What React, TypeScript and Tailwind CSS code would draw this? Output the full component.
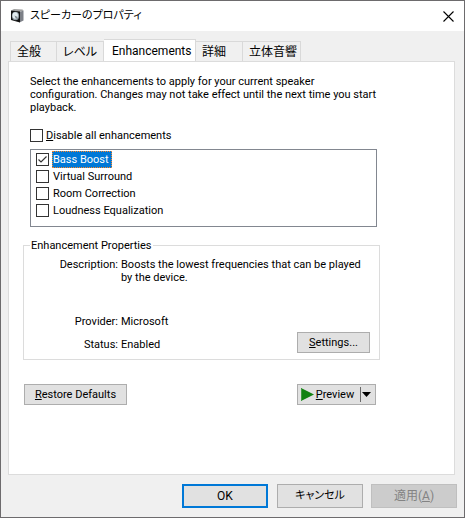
import clsx from 'clsx';
import { ReactNode, useState } from 'react';

interface CheckBoxProps {
    id: string;
    checked: boolean;
    onChange: () => void;
}

interface PushButtonProps {
    className?: string;
    disabled?: boolean;
    children: ReactNode;
}

const tabs = ['全般', 'レベル', 'Enhancements', '詳細', '立体音響'];

const enhancements = ['Bass Boost', 'Virtual Surround', 'Room Correction', 'Loudness Equalization'];

function SpeakerIcon() {
    return (
        <svg width="14" height="16" viewBox="0 0 14 16" aria-hidden="true">
            <path d="M0 2.5 3 1 11.5 1.5 12.5 2.5 8.5 4Z" fill="#a0a0a0" />
            <path d="M8.5 4 12.5 2.5V12.5L8.5 14.5Z" fill="#7d8087" />
            <path d="M0 2.5 9 3.5V14.5L0 12Z" fill="#111" />
            <ellipse cx="4.5" cy="8" rx="3.6" ry="4.2" fill="#8f9aa2" />
            <ellipse cx="4.2" cy="7.6" rx="2.7" ry="3.3" fill="#e3ecf0" />
            <path d="M3.5 7.5 6.5 9 5 11Z" fill="#7b858c" />
        </svg>
    );
}

function CheckBox({ id, checked, onChange }: CheckBoxProps) {
    return (
        <span className="relative flex h-[13px] w-[13px] shrink-0">
            <input
                id={id}
                type="checkbox"
                checked={checked}
                onChange={onChange}
                className="h-[13px] w-[13px] appearance-none border border-[#333] bg-white"
            />
            {checked && (
                <svg className="pointer-events-none absolute inset-0" width="13" height="13" viewBox="0 0 13 13">
                    <path d="M2.5 6.5 5 9 10.5 3.5" fill="none" stroke="#333" strokeWidth="1.2" />
                </svg>
            )}
        </span>
    );
}

function PushButton({ className, disabled, children }: PushButtonProps) {
    return (
        <button
            type="button"
            disabled={disabled}
            className={clsx(
                'flex items-center justify-center border whitespace-nowrap',
                disabled ? 'border-[#bfbfbf] bg-[#cccccc] text-[#838383]' : 'border-[#adadad] bg-[#e1e1e1]',
                className,
            )}
        >
            {children}
        </button>
    );
}

export default function App() {
    const [activeTab, setActiveTab] = useState('Enhancements');
    const [disableAll, setDisableAll] = useState(false);
    const [enabled, setEnabled] = useState(['Bass Boost']);

    const toggle = (name: string) => {
        setEnabled(enabled.includes(name) ? enabled.filter((item) => item !== name) : [...enabled, name]);
    };

    return (
        <div className="flex min-h-screen flex-col border border-[#6d6b6d] bg-[#f0f0f0] font-['Roboto','Noto_Sans_CJK_JP',sans-serif] text-[11px] leading-[13px] text-black">
            {/* Title bar */}
            <header className="flex h-[30px] items-center bg-white px-[10px]">
                <SpeakerIcon />
                <h1 className="ml-[5px] flex-1 text-[11px] leading-[16px] [font-feature-settings:'palt']">
                    スピーカーのプロパティ
                </h1>
                <button type="button" aria-label="閉じる">
                    <svg width="11" height="11" viewBox="0 0 11 11">
                        <path d="M0.5 0.5 10.5 10.5M10.5 0.5 0.5 10.5" stroke="#000" strokeWidth="1.1" />
                    </svg>
                </button>
            </header>

            {/* Tabs */}
            <nav role="tablist" className="flex items-end pt-2 pl-[9px] text-[12px] leading-[16px]">
                {tabs.map((tab) => (
                    <button
                        key={tab}
                        type="button"
                        role="tab"
                        aria-selected={tab === activeTab}
                        onClick={() => setActiveTab(tab)}
                        className={clsx(
                            "flex items-center border-t border-r border-[#d9d9d9] [font-feature-settings:'palt'] first:border-l",
                            tab === activeTab
                                ? '-mb-px h-[23px] w-[92px] bg-white pl-2'
                                : 'h-[20px] w-[47px] pl-[6px] last:w-[58px]',
                        )}
                    >
                        {tab}
                    </button>
                ))}
            </nav>

            {/* Enhancements page */}
            <main className="mr-[9px] ml-[7px] flex-1 border border-[#dcdcdc] bg-white pt-[13px] pr-[74px] pl-[14px]">
                <p className="ml-[7px] whitespace-nowrap">
                    Select the enhancements to apply for your current speaker
                    <br />
                    configuration. Changes may not take effect until the next time you start
                    <br />
                    playback.
                </p>

                <div className="mt-[15px] ml-[7px] flex items-center gap-[3px]">
                    <CheckBox id="disable-all" checked={disableAll} onChange={() => setDisableAll(!disableAll)} />
                    <label htmlFor="disable-all">
                        <u>D</u>isable all enhancements
                    </label>
                </div>

                <ul className="mt-[7px] mr-[3px] ml-[7px] h-[78px] border border-[#828790] pt-[1px] pl-[5px]">
                    {enhancements.map((name, index) => (
                        <li key={name} className="flex h-[17px] items-center gap-[3px]">
                            <CheckBox id={name} checked={enabled.includes(name)} onChange={() => toggle(name)} />
                            <label
                                htmlFor={name}
                                className={clsx(
                                    'border border-dotted pr-[2px] leading-[15px]',
                                    index === 0 ? 'border-[#ff8728] bg-[#0078d7] text-white' : 'border-transparent',
                                )}
                            >
                                {name}
                            </label>
                        </li>
                    ))}
                </ul>

                <fieldset className="mt-[12px] border border-[#dcdcdc] pr-[9px] pb-[6px] pl-[7px]">
                    <legend className="-ml-px px-px">Enhancement Properties</legend>
                    <div className="mt-[6px] flex">
                        <dl className="grid flex-1 grid-cols-[87px_1fr] gap-x-[3px]">
                            <dt className="text-right">Description:</dt>
                            <dd className="h-[57px] whitespace-nowrap">
                                Boosts the lowest frequencies that can be played
                                <br />
                                by the device.
                            </dd>
                            <dt className="text-right">Provider:</dt>
                            <dd className="h-[23px]">Microsoft</dd>
                            <dt className="text-right">Status:</dt>
                            <dd className="h-[15px]">Enabled</dd>
                        </dl>
                        <PushButton className="-ml-[73px] h-[21px] w-[73px] self-end">
                            <span>
                                <u>S</u>ettings...
                            </span>
                        </PushButton>
                    </div>
                </fieldset>

                <div className="mt-[24px] mr-[4px] ml-px flex justify-between">
                    <PushButton className="h-[21px] w-[103px]">
                        <span>
                            <u>R</u>estore Defaults
                        </span>
                    </PushButton>
                    <PushButton className="h-[21px] w-[79px]">
                        <svg width="13" height="13" viewBox="0 0 13 13" className="mr-[2px]" aria-hidden="true">
                            <path d="M0 0 13 6.5 0 13Z" fill="#128212" />
                            <path d="M0 0V13L1 12.5V0.5Z" fill="#3f9a3f" />
                        </svg>
                        <span>
                            <u>P</u>review
                        </span>
                        <svg width="12" height="15" viewBox="0 0 12 15" className="ml-[6px]" aria-hidden="true">
                            <path d="M0 0H1V15H0Z" fill="#696969" />
                            <path d="M2 5H11L6.5 10Z" fill="#000" />
                        </svg>
                    </PushButton>
                </div>
            </main>

            {/* Dialog buttons */}
            <footer className="flex justify-end gap-2 py-[9px] pr-[7px] text-[12px] leading-[16px]">
                <button type="button" className="mr-px h-[24px] w-[86px] border-2 border-[#0078d7] bg-[#e1e1e1]">
                    OK
                </button>
                <PushButton className="h-[24px] w-[86px] text-[11px] [font-feature-settings:'palt']">
                    キャンセル
                </PushButton>
                <PushButton className="h-[24px] w-[86px]" disabled>
                    <span>
                        適用(<u>A</u>)
                    </span>
                </PushButton>
            </footer>
        </div>
    );
}
